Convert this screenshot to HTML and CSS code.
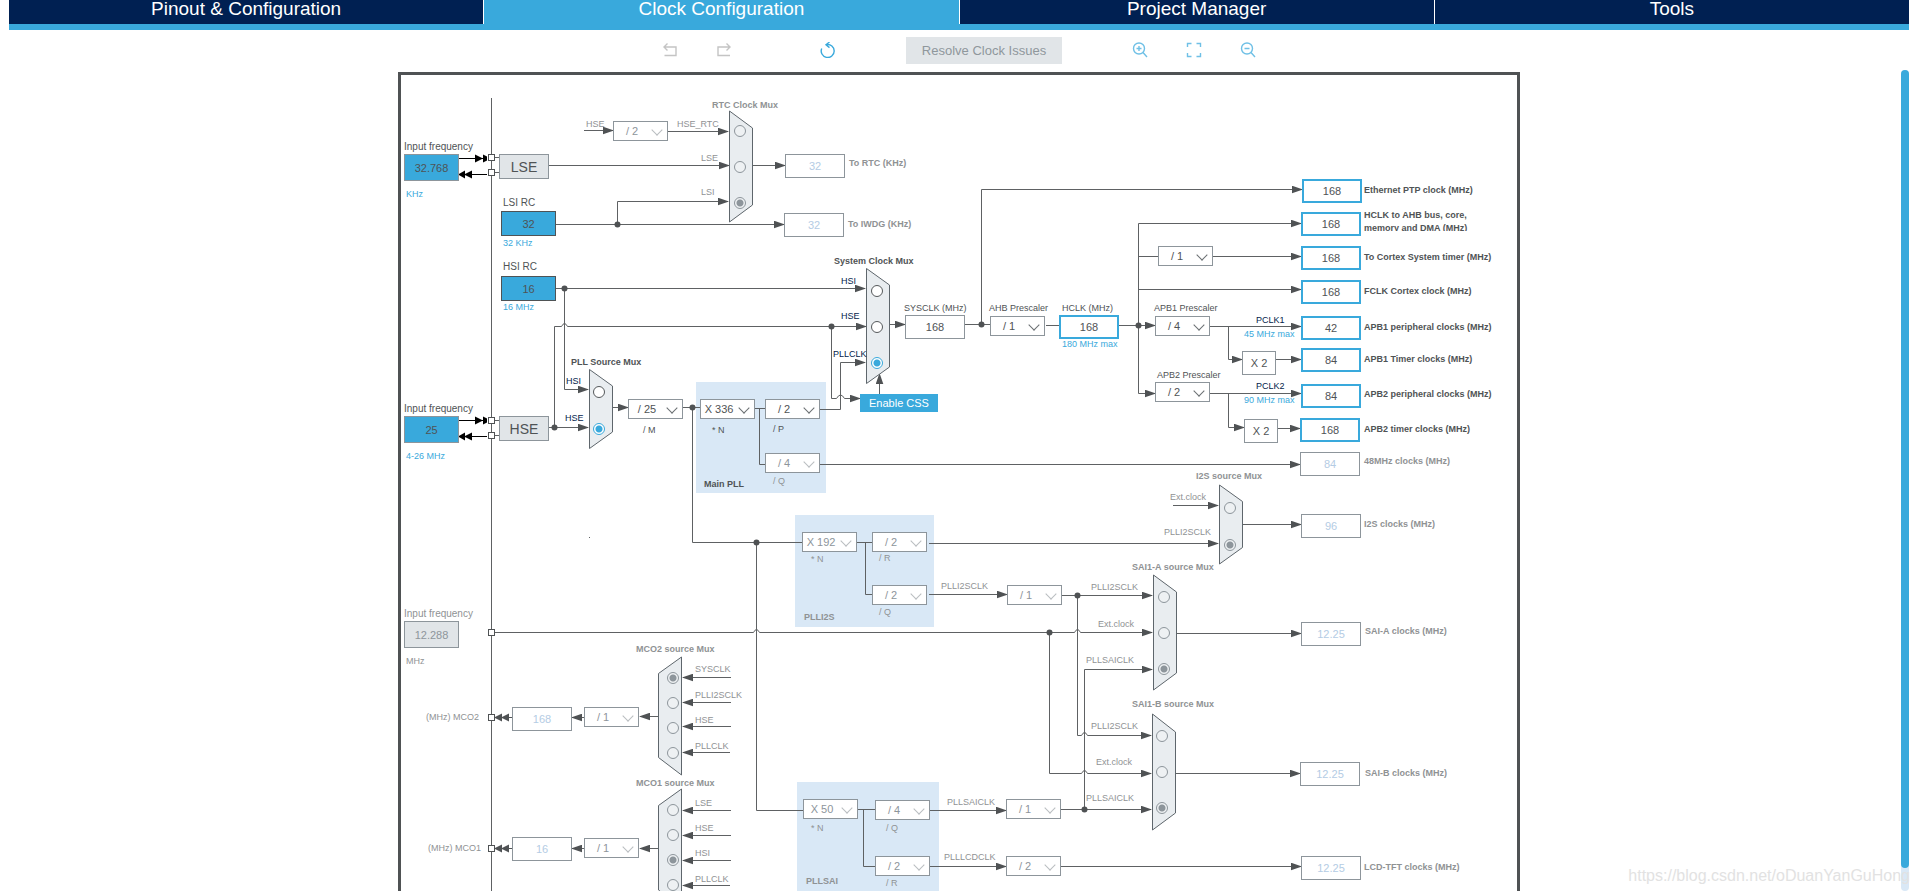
FILE: index.html
```html
<!DOCTYPE html>
<html lang="en">
<head>
<meta charset="utf-8">
<title>Clock Configuration</title>
<link rel="stylesheet" href="styles.css">
</head>
<body>
<nav class="tabs">
  <button class="tab" type="button">Pinout &amp; Configuration</button>
  <button class="tab tab-active" type="button" aria-current="page">Clock Configuration</button>
  <button class="tab" type="button">Project Manager</button>
  <button class="tab" type="button">Tools</button>
</nav>

<div class="toolbar">
  <button class="tool tool-off" type="button" aria-label="Undo" disabled>
    <svg viewBox="0 0 16 16"><path d="M1.500 5H13.500V13.500H2M5 1.500 1.500 5 5 8.500" transform="translate(.5 0)"/></svg>
  </button>
  <button class="tool tool-off" type="button" aria-label="Redo" disabled>
    <svg viewBox="0 0 16 16"><path d="M14 5H2V13.500H14M10.500 1.500 14 5 10.500 8.500"/></svg>
  </button>
  <button class="tool tool-reset" type="button" aria-label="Reset">
    <svg viewBox="0 0 16 16"><path d="M1.700 6.500A6.500 6.500 0 1 0 6.500 2.600M9.500 0 6 2.800 9.500 5.600"/></svg>
  </button>
  <button class="resolve" type="button" disabled>Resolve Clock Issues</button>
  <button class="tool tool-light" type="button" aria-label="Zoom in">
    <svg viewBox="0 0 16 16"><circle cx="7" cy="6.500" r="5.500"/><path d="M11 10.500 15 15M4.500 6.500H9.500M7 4V9"/></svg>
  </button>
  <button class="tool tool-light" type="button" aria-label="Fit to screen">
    <svg viewBox="0 0 16 16"><path d="M1.500 5V1.500H5.500M10.500 1.500H14.500V5M14.500 11V14.500H10.500M5.500 14.500H1.500V11"/></svg>
  </button>
  <button class="tool tool-light" type="button" aria-label="Zoom out">
    <svg viewBox="0 0 16 16"><circle cx="7" cy="6.500" r="5.500"/><path d="M11 10.500 15 15M4.500 6.500H9.500"/></svg>
  </button>
</div>

<main class="workspace">
  <section class="board" aria-label="Clock tree">
    <div class="diagram" id="diagram">
      <svg class="wires" viewBox="401 75 1116 840" width="1116" height="840" aria-hidden="true">
        <defs>
          <marker id="arrow" markerUnits="userSpaceOnUse" markerWidth="12" markerHeight="8" refX="10" refY="4" orient="auto">
            <path class="head" d="M0 .2 11 4 0 7.800Z"/>
          </marker>
        </defs>

        <g class="panels">
          <rect x="696" y="382" width="130" height="111"/>
          <rect x="795" y="515" width="139" height="112"/>
          <rect x="797" y="782" width="142" height="130"/>
        </g>

        <g class="wire">
          <path d="M491.500 98V915"/>
          <path d="M494 157.500H499M494 172.500H499M494 420.500H499M494 435.500H499"/>
          <path d="M617.500 224.500V201.500"/>
          <path d="M564.500 288.500V389.500"/>
          <path d="M554.500 427.500V326.500"/>
          <path d="M831.500 326.500V398.500"/>
          <path d="M683 407.500H700M692.500 407.500V542.500H802"/>
          <path d="M756.500 542.500V810.500H803"/>
          <path d="M755 408.500H765M759.500 408.500V464.500H765"/>
          <path d="M857 542.500H872M865.500 542.500V594.500H872"/>
          <path d="M858 809.500H875M863.500 809.500V866.500H875"/>
          <path d="M965 324.500H990M981.500 324.500V189.500"/>
          <path d="M1046 325.500H1059M1138.500 223.500V393.500M1138.500 256.500H1158"/>
          <path d="M1228.500 326.500V359.500M1228.500 393.500V427.500"/>
          <path d="M1077.500 595.500V735.500M1049.500 632.500V773.500M1084.500 809.500V669.500"/>
          <path d="M589 537.500H590"/>
        </g>

        <g class="wire arrowed">
          <path d="M584 130.500H613"/><path d="M668 131.500H728"/>
          <path d="M549 165.500H729"/><path d="M753 165.500H785"/>
          <path d="M617.500 201.500H728"/><path d="M556 224.500H784"/>
          <path d="M556 288.500H865"/>
          <path d="M554.500 326.500H561.500Q564.500 320.500 567.500 326.500H866"/>
          <path d="M564.500 389.500H588"/><path d="M549 427.500H588"/><path d="M613 407.500H628"/>
          <path d="M831.500 398.500H836.500Q840.500 391.500 844.500 398.500H860"/>
          <path d="M820 409.500H840.500V362.500H865"/>
          <path d="M879.500 394V374"/>
          <path d="M890 324.500H905"/>
          <path d="M981.500 189.500H1302"/><path d="M1138.500 223.500H1301"/>
          <path d="M1213 256.500H1301"/><path d="M1138.500 289.500H1301"/>
          <path d="M1119 325.500H1155"/><path d="M1138.500 393.500H1155"/>
          <path d="M1210 326.500H1301"/><path d="M1228.500 359.500H1242"/><path d="M1276 359.500H1301"/>
          <path d="M1210 393.500H1301"/><path d="M1228.500 427.500H1244"/><path d="M1278 428.500H1300"/>
          <path d="M820 464.500H1300"/>
          <path d="M1173 505.500H1218"/><path d="M929 543.500H1218"/><path d="M1243 524.500H1301"/>
          <path d="M929 594.500H1007"/><path d="M1062 595.500H1152"/>
          <path d="M494 632.500H753.500Q756.500 626.500 759.500 632.500H1074.500Q1077.500 626.500 1080.500 632.500H1152"/>
          <path d="M1084.500 669.500H1152"/><path d="M1177 633.500H1301"/>
          <path d="M1077.500 735.500H1081.500Q1084.500 729.500 1087.500 735.500H1151"/>
          <path d="M1049.500 773.500H1081.500Q1084.500 767.500 1087.500 773.500H1151"/>
          <path d="M1061 809.500H1151"/><path d="M1176 773.500H1300"/>
          <path d="M930 810.500H1006"/><path d="M930 866.500H1006"/><path d="M1061 866.500H1301"/>
          <path d="M731 677.500H683"/><path d="M731 702.500H683"/><path d="M731 726.500H683"/><path d="M730 752.500H683"/>
          <path d="M731 810.500H683"/><path d="M731 835.500H683"/><path d="M731 860.500H683"/><path d="M730 885.500H683"/>
          <path d="M659 716.500H640"/><path d="M584 717.500H572"/>
          <path d="M659 848.500H640"/><path d="M584 848.500H572"/>
        </g>

        <g class="dots">
          <circle cx="617.500" cy="224.500" r="3"/><circle cx="564.500" cy="288.500" r="3"/>
          <circle cx="554.500" cy="427.500" r="3"/><circle cx="831.500" cy="326.500" r="3"/>
          <circle cx="692.500" cy="407.500" r="3"/><circle cx="756.500" cy="542.500" r="3"/>
          <circle cx="981.500" cy="324.500" r="3"/><circle cx="1138.500" cy="325.500" r="3"/>
          <circle cx="1077.500" cy="595.500" r="3"/><circle cx="1049.500" cy="632.500" r="3"/>
          <circle cx="1084.500" cy="809.500" r="3"/>
          <path d="M494 717.500 502 713.500V721.500ZM501 717.500 509 713.500V721.500ZM508 717H512V718H508Z"/>
          <path d="M494 848.500 502 844.500V852.500ZM501 848.500 509 844.500V852.500ZM508 848H512V849H508Z"/>
        </g>

        <g class="pins">
          <path d="M459 158H487V159H459ZM475 154.500 483 158.500 475 162.500ZM483 154.500 487 156.500V160.500L483 162.500Z"/>
          <path d="M459 174H487V175H459ZM458 174.500 465 170.500V178.500ZM464 174.500 472 170.500V178.500Z"/>
          <path d="M459 420H487V421H459ZM475 416.500 483 420.500 475 424.500ZM483 416.500 487 418.500V422.500L483 424.500Z"/>
          <path d="M459 436H487V437H459ZM458 436.500 465 432.500V440.500ZM464 436.500 472 432.500V440.500Z"/>
        </g>

        <g class="ports">
          <rect x="488.500" y="154.500" width="6" height="6"/><rect x="488.500" y="169.500" width="6" height="6"/>
          <rect x="488.500" y="417.500" width="6" height="6"/><rect x="488.500" y="432.500" width="6" height="6"/>
          <rect x="488.500" y="629.500" width="6" height="6"/><rect x="488.500" y="714.500" width="6" height="6"/>
          <rect x="488.500" y="845.500" width="6" height="6"/>
        </g>

        <g class="muxes">
          <path d="M729.500 111 752.500 128V205L729.500 222Z"/>
          <path d="M866.500 268.500 889.500 285V367L866.500 383.500Z"/>
          <path d="M589.500 369.500 612.500 386V432L589.500 448.500Z"/>
          <path d="M1219.500 485 1242.500 501.500V547.500L1219.500 564Z"/>
          <path d="M1153.500 575 1176.500 592V673L1153.500 690Z"/>
          <path d="M1152.500 714 1175.500 732V813L1152.500 830Z"/>
          <path d="M681.500 657 658.500 673.500V757.500L681.500 775Z"/>
          <path d="M681.500 789 658.500 805.500V890L681.500 907Z"/>
        </g>
      </svg>
    </div>
  </section>
  <div class="scrollbar"><div class="thumb"></div></div>
</main>
<div class="watermark">https://blog.csdn.net/oDuanYanGuHong</div>
<script src="app.js"></script>
</body>
</html>
```
FILE: styles.css
```css
:root {
  --navy: #002052;
  --blue: #39a9dc;
  --ink: #4f5355;
  --muted: #8d959b;
  --pale: #b4cce4;
  --face: #e1e5e8;
  --panel: #d9e8f6;
}

* { box-sizing: border-box; }

body {
  display: flex;
  flex-direction: column;
  height: 100vh;
  margin: 0;
  padding: 0 10px 3px 9px;
  overflow: hidden;
  background: #fff;
  color: var(--ink);
  font-family: "Liberation Sans", Arial, sans-serif;
}

button, input, select {
  margin: 0;
  border-radius: 0;
  font-family: inherit;
}

.tabs {
  display: grid;
  grid-template-columns: repeat(4, 1fr);
  gap: 1px;
  border-bottom: 6px solid var(--blue);
}

.tab {
  padding: 0 0 6px;
  border: 0;
  background: var(--navy);
  color: #fff;
  font-size: 19px;
  line-height: 18px;
}

.tab-active { background: var(--blue); }

.toolbar {
  display: flex;
  justify-content: center;
  align-items: center;
  gap: 38px;
  height: 40px;
}

.tool {
  width: 16px;
  height: 16px;
  padding: 0;
  border: 0;
  background: none;
  color: var(--blue);
}

.tool svg {
  display: block;
  fill: none;
  stroke: currentColor;
  stroke-width: 1.4;
}

.tool-off { color: #c4c4c4; }
.tool-light { color: #6fc0e6; }
.tool-reset { margin: 0 32px 0 50px; }

.resolve {
  width: 156px;
  height: 27px;
  margin-right: 32px;
  padding: 0;
  border: 0;
  background: var(--face);
  color: #8f979c;
  font-size: 13px;
}

.workspace {
  display: grid;
  grid-template-columns: 8px 1fr 8px;
  flex: 1;
  min-height: 0;
}

.board {
  grid-column: 2;
  justify-self: center;
  margin-top: 2px;
  border: 3px solid #4f5254;
  border-bottom: 0;
  overflow: hidden;
}

.scrollbar {
  border-radius: 4px;
  background: var(--panel);
}

.thumb {
  height: 97.200%;
  border-radius: 4px;
  background: var(--blue);
}

.diagram { position: relative; }

.wires { display: block; }
.wire { fill: none; stroke: #5e6163; }
.arrowed path { marker-end: url(#arrow); }
.head, .dots { fill: #4f5254; }
.pins { fill: #000; }
.ports { fill: #fff; stroke: #4f5254; }
.panels { fill: var(--panel); }
.muxes { fill: #e9edf0; stroke: #5e666c; }

/* Diagram nodes */
.node { position: absolute; }

.label {
  font-size: 9px;
  line-height: 12px;
  white-space: nowrap;
}

.label.wide { font-size: 10px; }
.label.bold { font-weight: bold; }
.label.muted { color: #8f9294; }
.label.blue { color: var(--blue); }
.label.navy { color: #03234b; }

.label.clipped {
  width: 120px;
  height: 22px;
  line-height: 13px;
  white-space: normal;
  overflow: hidden;
}

.field {
  width: 60px;
  height: 24px;
  padding: 0;
  border: 1px solid var(--muted);
  background: #fff;
  color: var(--ink);
  font-size: 11px;
  text-align: center;
}

.field.target { border: 2px solid var(--blue); }
.field.idle { color: var(--pale); }
.field.gain { width: 34px; }

.field.source {
  width: 55px;
  height: 27px;
  background: var(--blue);
}

.field.rc {
  width: 55px;
  height: 25px;
  border-color: var(--ink);
  background: var(--blue);
}

.field.off {
  background: var(--face);
  color: var(--muted);
}

.osc {
  width: 50px;
  height: 25px;
  padding: 0;
  border: 1px solid var(--muted);
  background: var(--face);
  color: var(--ink);
  font-size: 14px;
}

.css-button {
  width: 78px;
  height: 18px;
  padding: 0;
  border: 0;
  background: var(--blue);
  color: #fff;
  font-size: 11px;
}

.picker {
  width: 55px;
  height: 20px;
}

.picker select {
  display: block;
  width: 100%;
  height: 100%;
  padding: 0 17px 0 0;
  border: 1px solid var(--muted);
  background: #fff;
  color: var(--ink);
  font-size: 11px;
  text-align-last: center;
  appearance: none;
}

.picker::after {
  content: "";
  position: absolute;
  top: 5px;
  right: 7px;
  width: 7px;
  height: 7px;
  border: solid #6a6f72;
  border-width: 0 1px 1px 0;
  transform: rotate(45deg);
  pointer-events: none;
}

.picker.muted select { color: var(--muted); }
.picker.muted::after { border-color: #b9bdc0; }

.radio {
  width: 12px;
  height: 12px;
  border: 1px solid #55595b;
  border-radius: 50%;
  background: #fff;
  appearance: none;
}

.radio:checked {
  border-color: var(--blue);
  background: radial-gradient(circle, var(--blue) 3px, #fff 4px);
}

.radio.muted {
  border-color: var(--muted);
  background: #eef1f3;
}

.radio.muted:checked { background: radial-gradient(circle, var(--muted) 3px, #eef1f3 4px); }

.watermark {
  position: absolute;
  right: 9px;
  bottom: 8px;
  color: #e2e2e2;
  font-size: 16px;
  line-height: 20px;
  pointer-events: none;
}
```
FILE: app.js
```js
// Sheet coordinates of the diagram's top-left corner.
const ORIGIN = { x: 401, y: 75 };
const diagram = document.getElementById('diagram');

function place(el, x, y, classes) {
  el.className = 'node ' + classes;
  el.style.left = (x - ORIGIN.x) + 'px';
  el.style.top = (y - ORIGIN.y) + 'px';
  diagram.appendChild(el);
  return el;
}

// x, vertical centre, text, style, id of the control it names
function addLabel(x, cy, text, style, target) {
  const el = document.createElement(target ? 'label' : 'span');
  if (target) el.htmlFor = target;
  el.textContent = text;
  place(el, x, cy - 6, 'label ' + (style || ''));
}

// id, x, y, value, style, [label x, label centre, label text, label style]
const fields = [
  ['lse-in', 404, 154, '32.768', 'source', [404, 147, 'Input frequency', 'wide']],
  ['hse-in', 404, 416, '25', 'source', [404, 409, 'Input frequency', 'wide']],
  ['i2s-in', 404, 621, '12.288', 'source off', [404, 614, 'Input frequency', 'wide muted']],
  ['lsi-rc', 501, 211, '32', 'rc', [503, 203, 'LSI RC', 'wide']],
  ['hsi-rc', 501, 276, '16', 'rc', [503, 267, 'HSI RC', 'wide']],
  ['rtc', 785, 154, '32', 'idle', [849, 163, 'To RTC (KHz)', 'bold muted']],
  ['iwdg', 784, 213, '32', 'idle', [848, 224, 'To IWDG (KHz)', 'bold muted']],
  ['sysclk', 905, 315, '168', '', [904, 308, 'SYSCLK (MHz)', '']],
  ['hclk', 1059, 315, '168', 'target', [1062, 308, 'HCLK (MHz)', '']],
  ['eth', 1302, 179, '168', 'target', [1364, 190, 'Ethernet PTP clock (MHz)', 'bold']],
  ['ahb', 1301, 212, '168', 'target', [1364, 215, 'HCLK to AHB bus, core, memory and DMA (MHz)', 'bold clipped']],
  ['cortex', 1301, 246, '168', 'target', [1364, 257, 'To Cortex System timer (MHz)', 'bold']],
  ['fclk', 1301, 280, '168', 'target', [1364, 291, 'FCLK Cortex clock (MHz)', 'bold']],
  ['apb1', 1301, 316, '42', 'target', [1364, 327, 'APB1 peripheral clocks (MHz)', 'bold']],
  ['apb1t', 1301, 348, '84', 'target', [1364, 359, 'APB1 Timer clocks (MHz)', 'bold']],
  ['apb2', 1301, 384, '84', 'target', [1364, 394, 'APB2 peripheral clocks (MHz)', 'bold']],
  ['apb2t', 1300, 418, '168', 'target', [1364, 429, 'APB2 timer clocks (MHz)', 'bold']],
  ['usb', 1300, 452, '84', 'idle', [1364, 461, '48MHz clocks (MHz)', 'bold muted']],
  ['i2s', 1301, 514, '96', 'idle', [1364, 524, 'I2S clocks (MHz)', 'bold muted']],
  ['sai-a', 1301, 622, '12.25', 'idle', [1365, 631, 'SAI-A clocks (MHz)', 'bold muted']],
  ['sai-b', 1300, 762, '12.25', 'idle', [1365, 773, 'SAI-B clocks (MHz)', 'bold muted']],
  ['lcd', 1301, 856, '12.25', 'idle', [1364, 867, 'LCD-TFT clocks (MHz)', 'bold muted']],
  ['mco2', 512, 707, '168', 'idle', [426, 717, '(MHz) MCO2', 'muted']],
  ['mco1', 512, 837, '16', 'idle', [428, 848, '(MHz) MCO1', 'muted']],
  ['apb1x', 1242, 351, 'X 2', 'gain'],
  ['apb2x', 1244, 419, 'X 2', 'gain'],
];

for (const [id, x, y, value, style, label] of fields) {
  const input = document.createElement('input');
  input.type = 'text';
  input.id = id;
  input.value = value;
  if (label) addLabel(...label, id);
  else input.setAttribute('aria-label', 'Timer multiplier');
  place(input, x, y, 'field ' + style);
}

// x, y, value, name, style
const pickers = [
  [613, 121, '/ 2', 'RTC prescaler', 'muted'],
  [990, 316, '/ 1', 'AHB prescaler', ''],
  [1158, 246, '/ 1', 'Cortex timer prescaler', ''],
  [1155, 316, '/ 4', 'APB1 prescaler', ''],
  [1155, 382, '/ 2', 'APB2 prescaler', ''],
  [628, 399, '/ 25', 'PLL M', ''],
  [700, 399, 'X 336', 'PLL N', ''],
  [765, 399, '/ 2', 'PLL P', ''],
  [765, 453, '/ 4', 'PLL Q', 'muted'],
  [802, 532, 'X 192', 'PLLI2S N', 'muted'],
  [872, 532, '/ 2', 'PLLI2S R', 'muted'],
  [872, 585, '/ 2', 'PLLI2S Q', 'muted'],
  [1007, 585, '/ 1', 'PLLI2SCLK divider', 'muted'],
  [803, 799, 'X 50', 'PLLSAI N', 'muted'],
  [875, 800, '/ 4', 'PLLSAI Q', 'muted'],
  [875, 856, '/ 2', 'PLLSAI R', 'muted'],
  [1006, 799, '/ 1', 'PLLSAICLK divider', 'muted'],
  [1006, 856, '/ 2', 'PLLLCDCLK divider', 'muted'],
  [584, 707, '/ 1', 'MCO2 prescaler', 'muted'],
  [584, 838, '/ 1', 'MCO1 prescaler', 'muted'],
];

for (const [x, y, value, name, style] of pickers) {
  const box = document.createElement('div');
  const select = document.createElement('select');
  select.setAttribute('aria-label', name);
  select.add(new Option(value));
  box.appendChild(select);
  place(box, x, y, 'picker ' + style);
}

// name, centre x, [centre y and source of each input], selected index, style
const muxes = [
  ['RTC Clock Mux', 740, [[131, 'HSE_RTC'], [167, 'LSE'], [203, 'LSI']], 2, 'muted'],
  ['System Clock Mux', 877, [[291, 'HSI'], [327, 'HSE'], [363, 'PLLCLK']], 2, ''],
  ['PLL Source Mux', 599, [[392, 'HSI'], [429, 'HSE']], 1, ''],
  ['I2S source Mux', 1230, [[508, 'Ext.clock'], [545, 'PLLI2SCLK']], 1, 'muted'],
  ['SAI1-A source Mux', 1164, [[597, 'PLLI2SCLK'], [633, 'Ext.clock'], [669, 'PLLSAICLK']], 2, 'muted'],
  ['SAI1-B source Mux', 1162, [[736, 'PLLI2SCLK'], [772, 'Ext.clock'], [808, 'PLLSAICLK']], 2, 'muted'],
  ['MCO2 source Mux', 673, [[678, 'SYSCLK'], [703, 'PLLI2SCLK'], [728, 'HSE'], [753, 'PLLCLK']], 0, 'muted'],
  ['MCO1 source Mux', 673, [[810, 'LSE'], [835, 'HSE'], [860, 'HSI'], [885, 'PLLCLK']], 2, 'muted'],
];

for (const [name, cx, inputs, selected, style] of muxes) {
  inputs.forEach(([cy, source], i) => {
    const radio = document.createElement('input');
    radio.type = 'radio';
    radio.name = name;
    radio.checked = i === selected;
    radio.setAttribute('aria-label', name + ': ' + source);
    place(radio, cx - 6, cy - 6, 'radio ' + style);
  });
}

const labels = [
  [406, 194, 'KHz', 'blue'], [406, 456, '4-26 MHz', 'blue'], [406, 661, 'MHz', 'muted'],
  [503, 243, '32 KHz', 'blue'], [503, 307, '16 MHz', 'blue'],
  [712, 105, 'RTC Clock Mux', 'bold muted'], [834, 261, 'System Clock Mux', 'bold'],
  [571, 362, 'PLL Source Mux', 'bold'], [1196, 476, 'I2S source Mux', 'bold muted'],
  [1132, 567, 'SAI1-A source Mux', 'bold muted'], [1132, 704, 'SAI1-B source Mux', 'bold muted'],
  [636, 649, 'MCO2 source Mux', 'bold muted'], [636, 783, 'MCO1 source Mux', 'bold muted'],
  [704, 484, 'Main PLL', 'bold'], [804, 617, 'PLLI2S', 'bold muted'], [806, 881, 'PLLSAI', 'bold muted'],
  [586, 124, 'HSE', 'muted'], [677, 124, 'HSE_RTC', 'muted'], [701, 158, 'LSE', 'muted'], [701, 192, 'LSI', 'muted'],
  [841, 281, 'HSI', 'navy'], [841, 316, 'HSE', 'navy'], [833, 354, 'PLLCLK', 'navy'],
  [566, 381, 'HSI', 'navy'], [565, 418, 'HSE', 'navy'],
  [989, 308, 'AHB Prescaler'], [1062, 344, '180 MHz max', 'blue'],
  [1154, 308, 'APB1 Prescaler'], [1157, 375, 'APB2 Prescaler'],
  [1256, 320, 'PCLK1', 'navy'], [1244, 334, '45 MHz max', 'blue'],
  [1256, 386, 'PCLK2', 'navy'], [1244, 400, '90 MHz max', 'blue'],
  [643, 430, '/ M'], [712, 430, '* N'], [773, 429, '/ P'], [773, 481, '/ Q', 'muted'],
  [811, 559, '* N', 'muted'], [879, 558, '/ R', 'muted'], [879, 612, '/ Q', 'muted'],
  [811, 828, '* N', 'muted'], [886, 828, '/ Q', 'muted'], [886, 883, '/ R', 'muted'],
  [941, 586, 'PLLI2SCLK', 'muted'], [947, 802, 'PLLSAICLK', 'muted'], [944, 857, 'PLLLCDCLK', 'muted'],
  [1170, 497, 'Ext.clock', 'muted'], [1164, 532, 'PLLI2SCLK', 'muted'],
  [1091, 587, 'PLLI2SCLK', 'muted'], [1098, 624, 'Ext.clock', 'muted'], [1086, 660, 'PLLSAICLK', 'muted'],
  [1091, 726, 'PLLI2SCLK', 'muted'], [1096, 762, 'Ext.clock', 'muted'], [1086, 798, 'PLLSAICLK', 'muted'],
  [695, 669, 'SYSCLK', 'muted'], [695, 695, 'PLLI2SCLK', 'muted'], [695, 720, 'HSE', 'muted'], [695, 746, 'PLLCLK', 'muted'],
  [695, 803, 'LSE', 'muted'], [695, 828, 'HSE', 'muted'], [695, 853, 'HSI', 'muted'], [695, 879, 'PLLCLK', 'muted'],
];

for (const label of labels) addLabel(label[0], label[1], label[2], label[3]);

function addButton(x, y, text, style) {
  const button = document.createElement('button');
  button.type = 'button';
  button.textContent = text;
  place(button, x, y, style);
}

addButton(499, 154, 'LSE', 'osc');
addButton(499, 416, 'HSE', 'osc');
addButton(860, 394, 'Enable CSS', 'css-button');
```
